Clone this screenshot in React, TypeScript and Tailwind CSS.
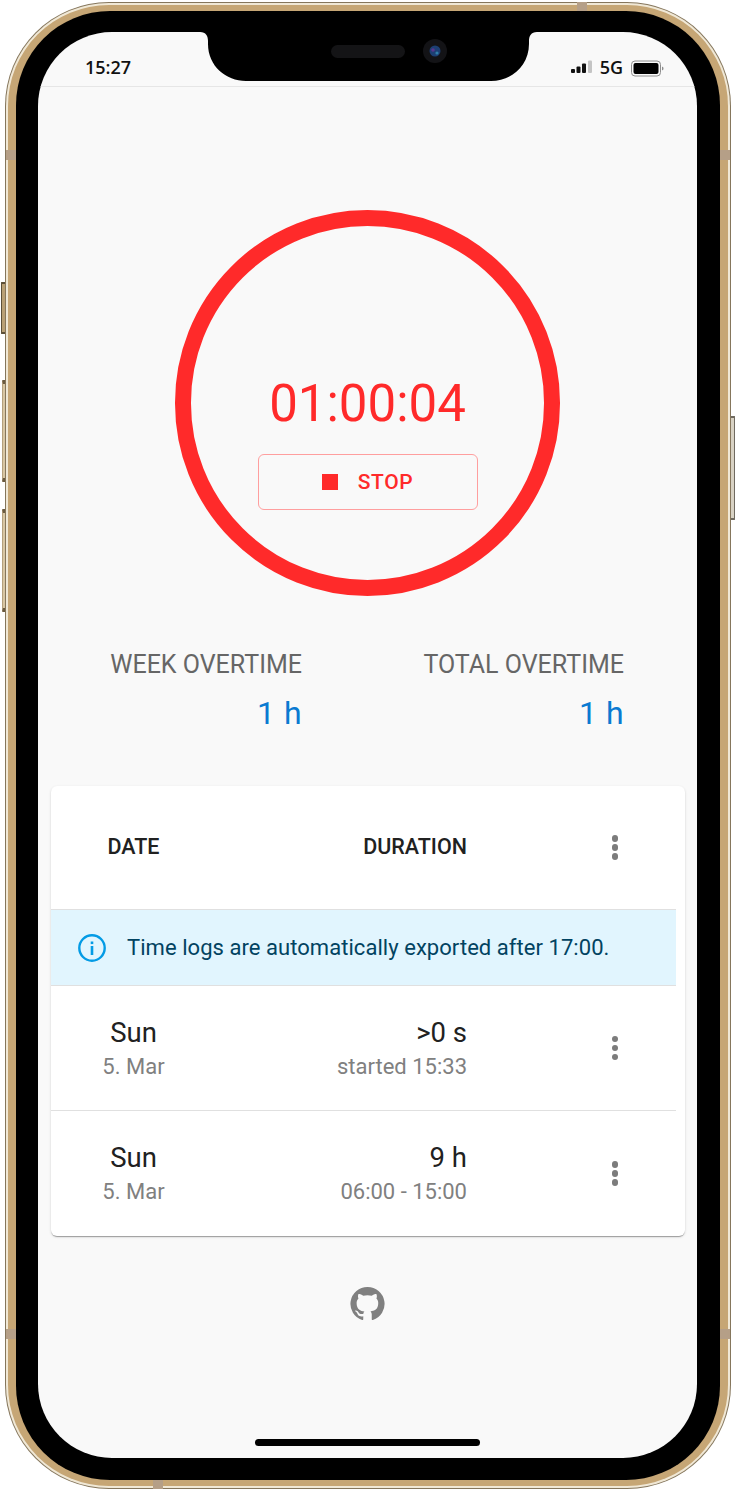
import React from "react";

const RED = "#ff2a2a";

function Dots() {
  return (
    <div className="w-12 ml-[124px] flex flex-col items-center gap-[2.5px]">
      <span className="w-[6.5px] h-[6.5px] rounded-full bg-[#7c7c7c]" />
      <span className="w-[6.5px] h-[6.5px] rounded-full bg-[#7c7c7c]" />
      <span className="w-[6.5px] h-[6.5px] rounded-full bg-[#7c7c7c]" />
    </div>
  );
}

function Row({ primary, sub, border }: { primary: string; sub: string; border?: boolean }) {
  return (
    <div className={`h-[125px] w-[625px] flex items-center ${border ? "border-b border-[#e0e0e0]" : ""}`}>
      <div className={`w-[165px] text-center ${border ? "mt-[4px]" : "mt-[2px]"}`}>
        <div className="text-[27.5px] leading-[34px] text-[#212121]">Sun</div>
        <div className="text-[22px] leading-[34px] text-[#808080]">5. Mar</div>
      </div>
      <div className={`w-[251px] text-right ${border ? "mt-[4px]" : "mt-[2px]"}`}>
        <div className="text-[27.5px] leading-[34px] text-[#212121]">{primary}</div>
        <div className="text-[22px] leading-[34px] text-[#808080]">{sub}</div>
      </div>
      <Dots />
    </div>
  );
}

function Stat({ label, className }: { label: string; className: string }) {
  return (
    <div className={`text-right ${className}`}>
      <div className="text-[25px] leading-[32px] text-[#666666]">{label}</div>
      <div className="text-[32px] leading-[40px] mt-[12px] tracking-[0.5px] text-[#0a7ad1]">1 h</div>
    </div>
  );
}

export default function App() {
  return (
    <div className="relative w-[736px] h-[1490px] bg-white" style={{ fontFamily: "Roboto, sans-serif" }}>
      {/* side buttons */}
      <div className="absolute left-[1px] top-[282px] w-[5px] h-[52px] rounded-l-[1px] bg-[#b9a075] border-y-2 border-l border-[#5d5038]" />
      <div className="absolute left-[2px] top-[380px] w-[4px] h-[102px] rounded-l-[1px] bg-[#d8c6a3] border-y-4 border-l border-y-[#6b5b40] border-l-[#b5a07c]" />
      <div className="absolute left-[2px] top-[509px] w-[4px] h-[103px] rounded-l-[1px] bg-[#d8c6a3] border-y-4 border-l border-y-[#6b5b40] border-l-[#b5a07c]" />
      <div className="absolute left-[731px] top-[416px] w-[4px] h-[104px] rounded-r-[1px] bg-[#d8d2c4] border-y-2 border-r border-[#6f6a60]" />

      {/* frame */}
      <div className="absolute left-[5px] top-[2px] w-[726px] h-[1487px] rounded-[104px] bg-[#85765c] p-[1px]">
        <div className="w-full h-full rounded-[103px] bg-[#f0e8d6] p-[2px]">
          <div className="w-full h-full rounded-[101px] bg-[#c6a675] py-[6px] px-[8px]">
            <div className="w-full h-full rounded-[94px] bg-black pt-[21px] pb-[22px] pl-[22px] pr-[23px]">
              {/* screen */}
              <div className="relative w-[659px] h-[1426px] rounded-[74px] overflow-hidden bg-[#f9f9f9] flex flex-col items-center">
                {/* notch */}
                <svg className="absolute left-[162px] top-0" width="337" height="50" viewBox="0 0 337 50">
                  <path
                    d="M0 0 H337 C331 0 329 4 329 9 V12 C329 34 311 49 291 49 H46 C26 49 8 34 8 12 V9 C8 4 6 0 0 0 Z"
                    fill="#000"
                  />
                  <rect x="131" y="13" width="74" height="13" rx="6.5" fill="#141416" />
                </svg>
                <svg className="absolute left-[385px] top-[7px]" width="24" height="24" viewBox="0 0 24 24">
                  <circle cx="12" cy="12" r="12" fill="#131316" />
                  <circle cx="12" cy="12" r="5.5" fill="#1d3f73" />
                  <circle cx="10" cy="11" r="1.8" fill="#59368c" />
                  <circle cx="14" cy="14" r="1.6" fill="#2f7ea8" />
                </svg>

                {/* status bar */}
                <div className="w-full h-[55px] shrink-0 border-b border-[#e6e6e6] flex items-start justify-between pt-[23.5px] pl-[47px] pr-[33px]">
                  <span className="text-[18px] leading-[22px] font-semibold text-[#111]" style={{ fontFamily: "'Open Sans', sans-serif" }}>
                    15:27
                  </span>
                  <div className="flex items-center h-[22px] gap-[8px]">
                    <svg width="21" height="14" viewBox="0 0 21 14">
                      <rect x="0" y="9" width="4" height="4" rx="1" fill="#111" />
                      <rect x="5.5" y="6.5" width="4" height="6.5" rx="1" fill="#111" />
                      <rect x="11" y="3.5" width="4" height="9.5" rx="1" fill="#111" />
                      <rect x="17" y="0.5" width="4" height="12.5" rx="1" fill="#c4c4c4" />
                    </svg>
                    <span className="text-[18px] leading-[22px] font-semibold text-[#111]" style={{ fontFamily: "'Open Sans', sans-serif" }}>
                      5G
                    </span>
                    <svg width="33" height="17" viewBox="0 0 33 17" className="mt-[3px]">
                      <rect x="0.5" y="1" width="29" height="15" rx="3.5" fill="none" stroke="#8e8e8e" />
                      <rect x="2.5" y="3" width="25" height="11" rx="2" fill="#000" />
                      <path d="M31 6.5 C32 7 32.5 7.5 32.5 8.5 C32.5 9.5 32 10 31 10.5 Z" fill="#8e8e8e" />
                    </svg>
                  </div>
                </div>

                {/* timer ring */}
                <div
                  className="mt-[123px] w-[385px] h-[386px] shrink-0 rounded-full border-[16px] flex flex-col items-center"
                  style={{ borderColor: RED }}
                >
                  <div className="mt-[148px] text-[51px] leading-[60px] text-[#ff2a2a]">01:00:04</div>
                  <div className="mt-[20px] w-[220px] h-[56px] rounded-[6px] border-[1.5px] border-[#ff9f9f] flex items-center justify-center">
                    <span className="w-4 h-4 bg-[#ff2a2a]" />
                    <span className="ml-[20px] pt-[1px] text-[21px] font-medium tracking-[0.6px] text-[#ff2a2a]">STOP</span>
                  </div>
                </div>

                {/* overtime */}
                <div className="w-full flex mt-[53px]">
                  <Stat label="WEEK OVERTIME" className="w-[264px]" />
                  <Stat label="TOTAL OVERTIME" className="w-[322px]" />
                </div>

                {/* card */}
                <div className="mt-[53px] ml-[13px] w-[634px] h-[450px] shrink-0 rounded-[6px] bg-white overflow-hidden shadow-[0_2px_1px_-1px_rgba(0,0,0,0.2),0_1px_1px_0_rgba(0,0,0,0.14),0_1px_3px_0_rgba(0,0,0,0.12)] self-start">
                  <div className="h-[124px] w-[625px] flex items-center border-b border-[#e0e0e0]">
                    <div className="w-[165px] text-center text-[21.5px] font-medium text-[#212121]">DATE</div>
                    <div className="w-[251px] text-right text-[21.5px] font-medium text-[#212121]">DURATION</div>
                    <Dots />
                  </div>
                  <div className="h-[76px] w-[625px] bg-[#e1f5fe] border-b border-[#e0e0e0] flex items-center">
                    <svg className="ml-[26px]" width="30" height="30" viewBox="0 0 30 30">
                      <circle cx="15" cy="15" r="12.7" fill="none" stroke="#039be5" strokeWidth="2.4" />
                      <rect x="13.7" y="13" width="2.6" height="9" fill="#039be5" />
                      <rect x="13.7" y="8.5" width="2.6" height="2.6" fill="#039be5" />
                    </svg>
                    <span className="ml-[20px] text-[22px] tracking-[0.05px] text-[#014361]">
                      Time logs are automatically exported after 17:00.
                    </span>
                  </div>
                  <Row primary=">0 s" sub="started 15:33" border />
                  <Row primary="9 h" sub="06:00 - 15:00" />
                </div>

                {/* github */}
                <svg className="mt-[49px]" width="37" height="37" viewBox="0 0 24 24" fill="#808080">
                  <path d="M12 1.27a11 11 0 00-3.48 21.46c.55.09.73-.28.73-.55v-1.84c-3.03.64-3.67-1.46-3.67-1.46-.55-1.29-1.28-1.65-1.28-1.65-.92-.65.1-.65.1-.65 1.1 0 1.73 1.1 1.73 1.1.92 1.65 2.57 1.2 3.21.92a2 2 0 01.64-1.47c-2.47-.27-5.04-1.19-5.04-5.5 0-1.1.46-2.1 1.2-2.84a3.76 3.76 0 010-2.93s.91-.28 3.11 1.1c1.8-.49 3.7-.49 5.5 0 2.1-1.38 3.02-1.1 3.02-1.1a3.76 3.76 0 010 2.93c.83.74 1.2 1.74 1.2 2.94 0 4.21-2.57 5.13-5.04 5.4.45.37.82.92.82 2.02v3.03c0 .27.1.64.73.55A11 11 0 0012 1.27" />
                </svg>

                {/* home indicator */}
                <div className="absolute left-[217px] top-[1407px] w-[225px] h-[7px] rounded-full bg-black" />
              </div>
            </div>
          </div>
        </div>
      </div>

      {/* antenna bands */}
      <div className="absolute left-[577px] top-[2px] w-[10px] h-[9px] bg-[#b59f87]" />
      <div className="absolute left-[153px] top-[1480px] w-[10px] h-[9px] bg-[#b59f87]" />
      <div className="absolute left-[6px] top-[150px] w-[10px] h-[10px] bg-[#b59f87]" />
      <div className="absolute left-[720px] top-[150px] w-[10px] h-[10px] bg-[#b59f87]" />
      <div className="absolute left-[6px] top-[1329px] w-[10px] h-[10px] bg-[#b59f87]" />
      <div className="absolute left-[720px] top-[1329px] w-[10px] h-[10px] bg-[#b59f87]" />
    </div>
  );
}
